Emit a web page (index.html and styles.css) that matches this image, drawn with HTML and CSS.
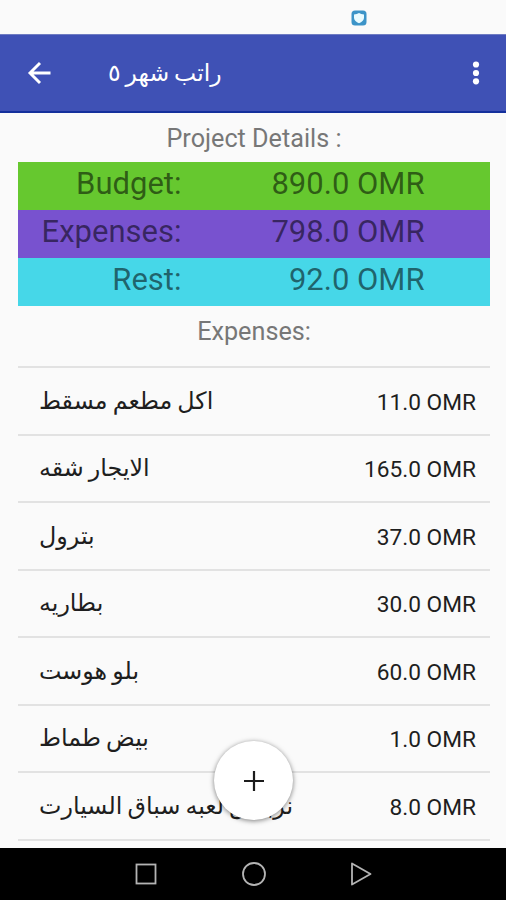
FILE: index.html
```
<!DOCTYPE html>
<html lang="en">
<head>
    <meta charset="UTF-8">
    <meta name="viewport" content="width=device-width, initial-scale=1.0">
    <title>Project Details</title>
    <link rel="stylesheet" href="styles.css">
</head>
<body>
    <div class="status-bar">
        <svg class="status-icon" viewBox="0 0 16 16" width="16" height="16">
            <rect x="0.5" y="0.5" width="15" height="15" rx="3.5" fill="#3c94c8"/>
            <path d="M3 4.5Q6 4.4 8 3Q10 4.4 13 4.5V8Q12.5 11.5 8 13.2Q3.5 11.5 3 8Z" fill="#e9fbff"/>
        </svg>
    </div>

    <header class="app-bar">
        <svg class="back-icon" viewBox="0 0 24 24" width="24" height="24">
            <path d="M23.5 12H2.5M13 2L3 12L13 22" fill="none" stroke="#fff" stroke-width="2.9"/>
        </svg>
        <h1 class="app-title" dir="rtl">راتب شهر ٥</h1>
        <svg class="menu-icon" viewBox="0 0 8 24" width="8" height="24">
            <circle cx="4" cy="3.5" r="3.1" fill="#fff"/>
            <circle cx="4" cy="12" r="3.1" fill="#fff"/>
            <circle cx="4" cy="20.3" r="3.1" fill="#fff"/>
        </svg>
    </header>

    <main class="content">
        <h2 class="section-title">Project Details :</h2>

        <div class="summary">
            <div class="summary-row budget">
                <span class="summary-label">Budget:</span>
                <span class="summary-value">890.0 OMR</span>
            </div>
            <div class="summary-row expenses">
                <span class="summary-label">Expenses:</span>
                <span class="summary-value">798.0 OMR</span>
            </div>
            <div class="summary-row rest">
                <span class="summary-label">Rest:</span>
                <span class="summary-value">92.0 OMR</span>
            </div>
        </div>

        <h2 class="section-title list-title">Expenses:</h2>

        <ul class="expense-list">
            <li><span class="name" dir="rtl">اكل مطعم مسقط</span><span class="amount">11.0 OMR</span></li>
            <li><span class="name" dir="rtl">الايجار شقه</span><span class="amount">165.0 OMR</span></li>
            <li><span class="name" dir="rtl">بترول</span><span class="amount">37.0 OMR</span></li>
            <li><span class="name" dir="rtl">بطاريه</span><span class="amount">30.0 OMR</span></li>
            <li><span class="name" dir="rtl">بلو هوست</span><span class="amount">60.0 OMR</span></li>
            <li><span class="name" dir="rtl">بيض طماط</span><span class="amount">1.0 OMR</span></li>
            <li><span class="name" dir="rtl">نربيس لعبه سباق السيارت</span><span class="amount">8.0 OMR</span></li>
        </ul>

        <button class="add-button" aria-label="Add">
            <svg viewBox="0 0 20 20" width="20" height="20">
                <path d="M10 0V20M0 10H20" stroke="#1c1c1c" stroke-width="2.2"/>
            </svg>
        </button>
    </main>

    <nav class="nav-bar">
        <svg viewBox="0 0 24 24" width="24" height="24">
            <rect x="2.5" y="2.5" width="19" height="19" fill="none" stroke="#b4b4b4" stroke-width="1.8"/>
        </svg>
        <svg viewBox="0 0 24 24" width="24" height="24">
            <circle cx="12" cy="12" r="11" fill="none" stroke="#b4b4b4" stroke-width="1.8"/>
        </svg>
        <svg viewBox="0 0 24 24" width="24" height="24">
            <path d="M2 1.5L20.5 12L2 22.5Z" fill="none" stroke="#b4b4b4" stroke-width="1.8" stroke-linejoin="round"/>
        </svg>
    </nav>
</body>
</html>
```
FILE: styles.css
```
* {
    box-sizing: border-box;
}

body {
    margin: 0;
    height: 900px;
    display: flex;
    flex-direction: column;
    overflow: hidden;
    background-color: #fafafa;
    font-family: Roboto, "DejaVu Sans", sans-serif;
}

.status-bar {
    height: 34px;
    flex: none;
    padding: 10px 0 0 351px;
}

.status-icon {
    display: block;
}

.app-bar {
    height: 79px;
    flex: none;
    display: flex;
    align-items: center;
    padding: 0 26px 0 27px;
    background-color: #3f51b5;
    border-top: 1px solid #6f7cc2;
    border-bottom: 2px solid #14309c;
}

.app-title {
    margin: 0 auto 0 57px;
    color: #fff;
    font-family: "DejaVu Sans", sans-serif;
    font-size: 23.5px;
    font-weight: 400;
    line-height: 40px;
    word-spacing: -2.5px;
}

.content {
    position: relative;
    flex: none;
    height: 735px;
    padding: 0 16px 0 18px;
}

.section-title {
    margin: 0;
    height: 49px;
    line-height: 52px;
    text-align: center;
    color: #777;
    font-size: 25.2px;
    font-weight: 400;
}

.list-title {
    height: 60px;
}

.summary-row {
    display: flex;
    height: 48px;
    line-height: 44px;
    font-size: 31px;
    color: rgba(0, 0, 0, 0.55);
}

.summary-label {
    width: 163.5px;
    text-align: right;
}

.summary-value {
    width: 243px;
    text-align: right;
}

.budget {
    background-color: #66c82f;
}

.expenses {
    background-color: #7852cf;
}

.rest {
    background-color: #46d7e8;
}

.expense-list {
    margin: 0;
    padding: 0;
    list-style: none;
    border-bottom: 2px solid #e2e2e2;
}

.expense-list li {
    display: flex;
    justify-content: space-between;
    align-items: center;
    height: 67.5px;
    padding: 2px 14px 0 21px;
    border-top: 2px solid #e2e2e2;
    color: #1e1e1e;
}

.name {
    margin-top: -2px;
    font-family: "DejaVu Sans", sans-serif;
    font-size: 23.8px;
    line-height: 36px;
    word-spacing: -2.5px;
}

.amount {
    margin-top: 1px;
    font-size: 22.7px;
}

/* floating button over the list */
.add-button {
    position: absolute;
    left: 214px;
    bottom: 28px;
    width: 79px;
    height: 79px;
    display: flex;
    align-items: center;
    justify-content: center;
    padding: 0;
    border: none;
    border-radius: 50%;
    background-color: #fff;
    box-shadow: 0 1px 5px rgba(0, 0, 0, 0.5);
}

.nav-bar {
    flex: 1;
    display: flex;
    justify-content: center;
    align-items: center;
    gap: 84px;
    padding-left: 1px;
    background-color: #000;
}
```
